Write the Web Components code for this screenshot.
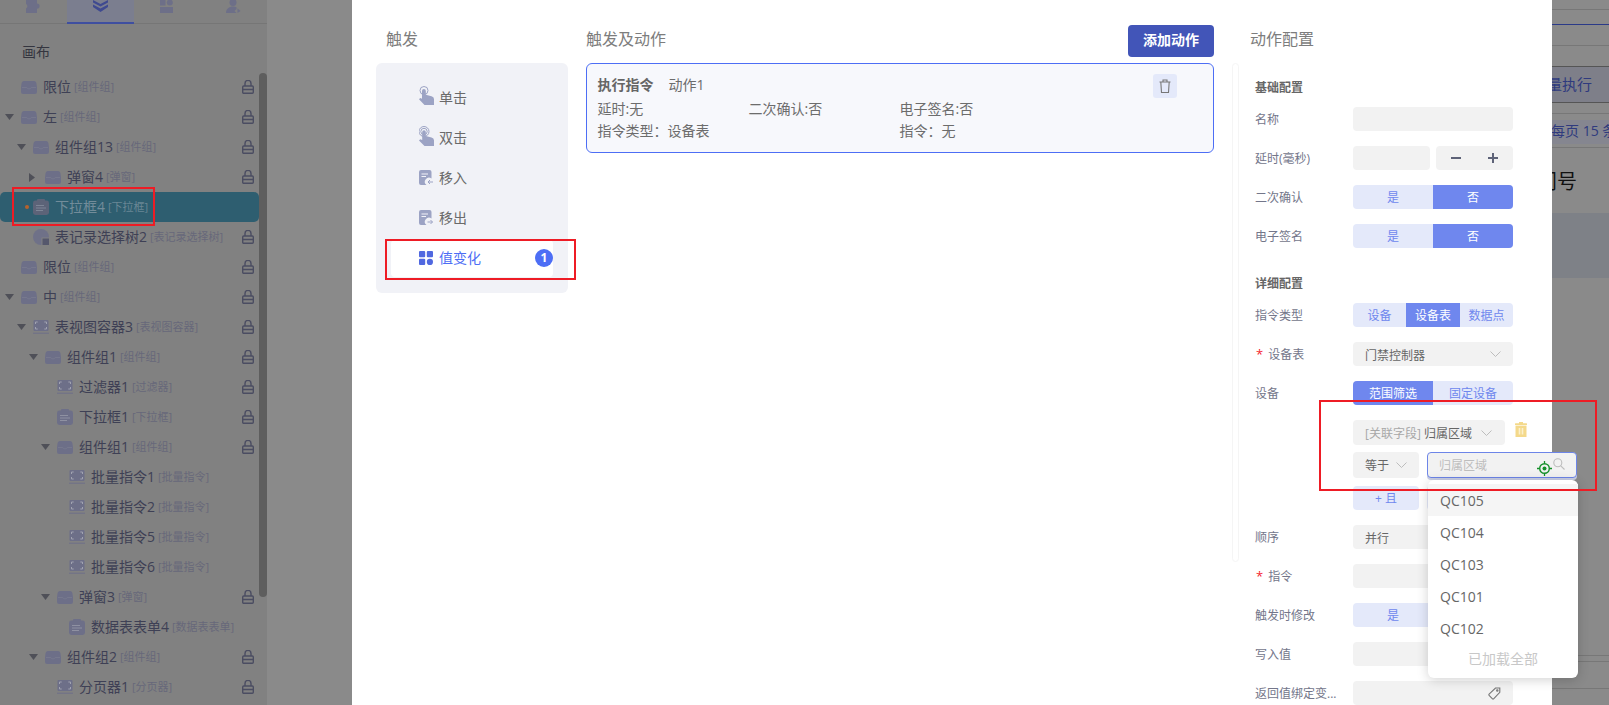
<!DOCTYPE html>
<html lang="zh"><head><meta charset="utf-8"><title>动作配置</title>
<style>
html,body{margin:0;padding:0;width:1609px;height:705px;overflow:hidden;background:#8a8a8a;font-family:"Open Sans","Noto Sans CJK SC",sans-serif;font-size:14px}
ed-page{display:flex}
</style></head><body>
<ed-page>
  <ed-sidebar></ed-sidebar>
  <ed-backdrop></ed-backdrop>
  <ed-modal></ed-modal>
  <ed-mark style="left:12px;top:187px;width:143px;height:39px"></ed-mark>
  <ed-mark style="left:385px;top:239px;width:191px;height:41px"></ed-mark>
  <ed-mark style="left:1319px;top:400px;width:278px;height:91px"></ed-mark>
</ed-page>
<script>
const ICON={
group:'<svg width="16" height="13" viewBox="0 0 16 13"><path d="M3 0h10c1.200 0 2 .8 2.400 2L16 6.500V11a2 2 0 0 1-2 2H2a2 2 0 0 1-2-2V6.500L.6 2C1 .8 1.800 0 3 0z" fill="#6d6f88"/><path d="M1 6.500h4.800l1 1.300h2.400l1-1.300H15" fill="none" stroke="#7e7f92" stroke-width=".6"/></svg>',
box:'<svg width="16" height="14" viewBox="0 0 16 14"><rect x="0.5" y="0" width="15" height="11" rx="1" fill="#6d6f88"/><path d="M2.500 4V2h2.200M11.300 2h2.200v2M13.500 7v2h-2.200M4.700 9H2.500V7" fill="none" stroke="#a0a2b0" stroke-width="1"/><path d="M0 13.200h16" stroke="#6d6f88" stroke-width="1"/></svg>',
clip:'<svg width="16" height="16" viewBox="0 0 16 16"><rect x="0" y="1.500" width="16" height="14.500" rx="2.400" fill="#6d6f88"/><rect x="4" y="0" width="8" height="3" rx="1" fill="#6d6f88"/><path d="M3 6.500h8M3 9h10M3 11.500h7" stroke="#8f91a2" stroke-width="1"/></svg>',
clipsel:'<svg width="16" height="16" viewBox="0 0 16 16"><rect x="0" y="1.500" width="16" height="14.500" rx="2.400" fill="#5c6378"/><rect x="4" y="0" width="8" height="3" rx="1" fill="#5c6378"/><path d="M3 6.500h8M3 9h10M3 11.500h7" stroke="#7d8596" stroke-width="1"/></svg>',
tree:'<svg width="16" height="16" viewBox="0 0 16 16"><circle cx="8" cy="8" r="8" fill="#6f7188"/><rect x="8.500" y="8.500" width="7.500" height="7.500" fill="#818181"/><rect x="9.500" y="9.500" width="6.500" height="6.500" fill="#55576c"/></svg>',
lock:'<svg width="12" height="14" viewBox="0 0 12 14" fill="none" stroke="#4b4d62" stroke-width="1.400"><rect x="0.7" y="6" width="10.600" height="7.300" rx="1"/><path d="M3 6V3.400a3 3 0 0 1 6 0V6M0.700 9.500h10.600"/></svg>',
down:'<svg width="9" height="6" viewBox="0 0 9 6" fill="#4f5058"><path d="M0 0h9L4.500 6z"/></svg>',
right:'<svg width="6" height="9" viewBox="0 0 6 9" fill="#4f5058"><path d="M0 0v9l6-4.500z"/></svg>',
tap:'<svg width="15" height="19" viewBox="0 0 15 19"><circle cx="5" cy="4.500" r="4" fill="none" stroke="#9ca3c4" stroke-width="1"/><path d="M3 5a1.900 1.900 0 0 1 3.800 0v3.800l5.700 1.400A3 3 0 0 1 15 13.200V19H5.500L0 13.200l1.200-1.200L3 12.800z" fill="#9ca3c4"/></svg>',
dbl:'<svg width="15" height="20" viewBox="0 0 15 20"><circle cx="5" cy="5.500" r="5" fill="none" stroke="#9ca3c4" stroke-width="1"/><circle cx="5" cy="5.500" r="3.200" fill="none" stroke="#9ca3c4" stroke-width="1"/><path d="M3.200 6a1.800 1.800 0 0 1 3.600 0v4l5.700 1.400A3 3 0 0 1 15 14.400V20H5.500L0 14.400l1.200-1.200L3.200 14z" fill="#9ca3c4"/></svg>',
docin:'<svg width="14" height="15" viewBox="0 0 14 15"><path d="M2 0h8.500a2 2 0 0 1 2 2v6.500a4 4 0 0 0-5 6.500H2a2 2 0 0 1-2-2V2a2 2 0 0 1 2-2z" fill="#9ca3c4"/><path d="M2.500 4h6.500M2.500 6.500h4.500" stroke="#f1f2f7" stroke-width="1.100"/><path d="M14 12H9M11 10l-2 2 2 2" fill="none" stroke="#9ca3c4" stroke-width="1"/></svg>',
docout:'<svg width="14" height="15" viewBox="0 0 14 15"><path d="M2 0h8.500a2 2 0 0 1 2 2v6.500a4 4 0 0 0-5 6.500H2a2 2 0 0 1-2-2V2a2 2 0 0 1 2-2z" fill="#9ca3c4"/><path d="M2.500 4h6.500M2.500 6.500h4.500" stroke="#f1f2f7" stroke-width="1.100"/><path d="M8.500 12h5M11.500 10l2 2-2 2" fill="none" stroke="#9ca3c4" stroke-width="1"/></svg>',
grid:'<svg width="14" height="14" viewBox="0 0 14 14" fill="#5068e0"><rect width="6.200" height="6.200" rx="1"/><rect x="7.800" width="6.200" height="6.200" rx="1"/><rect y="7.800" width="6.200" height="6.200" rx="1"/><circle cx="10.900" cy="10.900" r="3.100"/></svg>',
trash:'<svg width="12" height="14" viewBox="0 0 12 14" fill="none" stroke="#777" stroke-width="1.100"><path d="M0.500 3h11M4 3V1h4v2M1.800 3l.7 10.500h7L10.200 3"/></svg>',
ytrash:'<svg width="12" height="15" viewBox="0 0 12 15"><path d="M4 0h4v1.200h3.500a.5.500 0 0 1 .5.500V3H0V1.700a.5.500 0 0 1 .5-.5H4z" fill="#f4d98b"/><path d="M0.500 3.600h11V15h-11z" fill="#f4d98b"/><path d="M4.500 6v6.500M7.500 6v6.500" stroke="#fbf0cc" stroke-width="1.600"/></svg>',
target:'<svg width="15" height="15" viewBox="0 0 15 15" fill="none" stroke="#15902a"><circle cx="7.500" cy="7.500" r="4.800" stroke-width="1.400"/><circle cx="7.500" cy="7.500" r="2" fill="#15902a" stroke="none"/><path d="M7.500 0v2.500M7.500 12.500v2.500M0 7.500h2.500M12.500 7.500h2.500" stroke-width="1.300"/></svg>',
search:'<svg width="12" height="12" viewBox="0 0 12 12" fill="none" stroke="#bdbdbd" stroke-width="1.100"><circle cx="4.800" cy="4.800" r="4"/><path d="M7.800 7.800l3.700 3.700"/></svg>',
tag:'<svg width="13" height="13" viewBox="0 0 13 13" fill="none" stroke="#777" stroke-width="1.100"><path d="M7.500 1h4.300v4.300L5.600 11.800a.8.800 0 0 1-1.100 0L1.100 8.300a.8.800 0 0 1 0-1.100z"/><circle cx="9.300" cy="3.500" r=".7"/></svg>',
chev:'<svg width="11" height="6" viewBox="0 0 11 6" fill="none" stroke="#bdbdbd" stroke-width="1"><path d="M.5.500l5 5 5-5"/></svg>',
puzzle:'<svg width="15" height="13" viewBox="0 0 15 13" fill="#6d6f88"><path d="M0 0h11v3.500a2.600 2.600 0 0 1 0 5.200V13H0V8.500a2.500 2.500 0 0 0 0-4.500z"/></svg>',
layers:'<svg width="15" height="12" viewBox="0 0 15 12" fill="#3f4a90"><path d="M0 0l7.500 4L15 0v2.500L7.500 6.500 0 2.500zM0 4.500l7.500 4 7.500-4V7l-7.500 5L0 7z"/></svg>',
dash:'<svg width="13" height="13" viewBox="0 0 13 13" fill="#6d6f88"><rect width="5.500" height="5.500"/><circle cx="9.800" cy="2.600" r="3"/><path d="M0 7h13v6H0z"/></svg>',
user:'<svg width="15" height="13" viewBox="0 0 15 13" fill="#6d6f88"><circle cx="7" cy="2.500" r="3.500"/><path d="M0 13c0-4 3-6.500 7-6.500 1.500 0 2.500.3 3.500.8V9l-2 2 2 2z"/><path d="M11.500 8.500l3 2.500-3 2z"/></svg>'
};
function def(tag,css,html,init){
  customElements.define(tag,class extends HTMLElement{
    constructor(){super();this.attachShadow({mode:'open'});}
    connectedCallback(){
      const h=typeof html==='function'?html(this):html;
      this.shadowRoot.innerHTML='<style>'+css+'</style>'+h;
      if(init)init(this);
    }
  });
}
const A=(e,n,d='')=>e.hasAttribute(n)?e.getAttribute(n):d;

def('ed-mark',':host{position:absolute;box-sizing:border-box;border:2px solid #ee1c25;z-index:9;pointer-events:none}','');
def('ed-page',':host{display:flex;width:1609px;height:705px;position:relative;overflow:hidden}','<slot></slot>');

/* tree row */
def('ed-row',`
:host{display:flex;align-items:center;height:30px;box-sizing:border-box;padding-right:5px;border-radius:5px;white-space:nowrap}
:host([sel]){background:#2e5e70}
.i{width:16px;display:flex;align-items:center;justify-content:center;margin-right:6px;flex:none}
.a{width:16px;flex:none;display:flex;align-items:center}
.n{color:#3e4055;font-size:14px;margin-top:-2px}
.t{color:#67687a;font-size:11px;margin:-2px 0 0 3px;flex:1}
.l{flex:none;display:flex}
:host([sel]) .n{color:#728c9a}
:host([sel]) .t{color:#6a8795}
.dot{width:4px;height:4px;border-radius:50%;background:#b5622c;margin-left:8px}
`,e=>{
  const d=+A(e,'d','0'),arrow=A(e,'arrow'),icon=A(e,'icon','group');
  e.style.paddingLeft=(d*12+5)+'px';
  return `<span class="a">${arrow?ICON[arrow]:''}${e.hasAttribute('sel')?'<span class="dot"></span>':''}</span>
  <span class="i">${ICON[icon]}</span><span class="n">${A(e,'n')}</span><span class="t">[${A(e,'t')}]</span>
  ${e.hasAttribute('nolock')||e.hasAttribute('sel')?'':'<span class="l">'+ICON.lock+'</span>'}`;
});

def('ed-tab',`
:host{flex:1;height:24px;box-sizing:border-box;display:flex;justify-content:center;align-items:flex-start;overflow:hidden}
:host([on]){background:#7b7e8f;border-bottom:2px solid #3f4fa0}
`,e=>ICON[A(e,'i')]);

def('ed-sidebar',`
:host{display:flex;flex-direction:column;width:267px;height:705px;background:#818181;flex:none;position:relative;overflow:hidden}
.tabs{display:flex;height:24px;border-bottom:1px solid #767676;box-sizing:border-box;flex:none}
.canvas{height:30px;line-height:28px;margin:14px 0 4px;padding-left:22px;color:#34353f;font-size:14px;flex:none}
.tree{width:259px;flex:none}
.bar{position:absolute;left:259px;top:73px;width:8px;height:524px;border-radius:4px;background:#5e5e5e}
`,()=>{
 const rows=[
 ['0','','group','限位','组件组'],['0','down','group','左','组件组'],['1','down','group','组件组13','组件组'],
 ['2','right','group','弹窗4','弹窗'],['1','','clipsel','下拉框4','下拉框','sel'],['1','','tree','表记录选择树2','表记录选择树'],
 ['0','','group','限位','组件组'],['0','down','group','中','组件组'],['1','down','box','表视图容器3','表视图容器'],
 ['2','down','group','组件组1','组件组'],['3','','box','过滤器1','过滤器'],['3','','clip','下拉框1','下拉框'],
 ['3','down','group','组件组1','组件组'],['4','','box','批量指令1','批量指令','nolock'],['4','','box','批量指令2','批量指令','nolock'],
 ['4','','box','批量指令5','批量指令','nolock'],['4','','box','批量指令6','批量指令','nolock'],['3','down','group','弹窗3','弹窗'],
 ['4','','clip','数据表表单4','数据表表单','nolock'],['2','down','group','组件组2','组件组'],['3','','box','分页器1','分页器']];
 return `<div class="tabs"><ed-tab i="puzzle"></ed-tab><ed-tab i="layers" on></ed-tab><ed-tab i="dash"></ed-tab><ed-tab i="user"></ed-tab></div>
 <div class="canvas">画布</div><div class="tree">${rows.map(r=>`<ed-row d="${r[0]}" arrow="${r[1]}" icon="${r[2]}" n="${r[3]}" t="${r[4]}" ${r[5]||''}></ed-row>`).join('')}</div><div class="bar"></div>`;
});

/* page behind the mask */
def('ed-backdrop',`
:host{flex:1;display:flex;flex-direction:column;height:705px;background:#8a8a8a;overflow:hidden;white-space:nowrap;padding-left:85px;box-sizing:border-box}
div{box-sizing:border-box;flex:none}
.l{border-bottom:1px solid #777}
.btn{height:37px;background:#7e7f89;border-bottom:1px solid #555;border-top:1px solid #555;display:flex;justify-content:flex-end;align-items:center;padding:0 17px 2px 0;color:#2f3a7e;font-size:15px}
.pg{height:24px;background:#858690;margin-top:6px;padding-left:1199px;color:#2f3a7e;font-size:14px;line-height:22px}
.hd{height:65px;padding-left:1185px;color:#111;font-size:20px;line-height:68px}
.band{height:65px;background:#7e8187}
`,`<div class="l" style="height:10px"></div>
<div style="height:15px;border-bottom:1px solid #2b3a88"></div>
<div class="l" style="height:21px"></div>
<div style="height:20px"></div>
<div class="btn">批量执行</div>
<div class="l" style="height:11px"></div>
<div class="pg">每页 15 条</div>
<div class="l" style="height:4px"></div>
<div class="hd">门号</div>
<div class="band"></div>
<div style="height:378px" class="l"></div>
<div class="l" style="height:6px"></div>
<div class="l" style="height:27px"></div>`);

/* trigger list */
def('ed-trigger',`
:host{display:flex;align-items:center;height:37px;padding-left:28px;color:#6a6a6a;font-size:14px;border-radius:4px;position:relative;flex:none}
:host([on]){background:#fff;color:#4d6ef5}
.i{width:20px;display:flex;align-items:center;margin-top:-2px}
:host([i=tap]) .i,:host([i=dbl]) .i{margin-top:-6px}
:host([on]) .i{margin-top:-1px}
.t{margin-top:-4px}
.b{position:absolute;right:0;top:9px;width:18px;height:18px;border-radius:50%;background:#4d6ef5;color:#fff;font-size:12px;font-weight:700;line-height:18px;text-align:center}
`,e=>`<span class="i">${ICON[A(e,'i')]}</span><span class="t"><slot></slot></span>${e.hasAttribute('n')?`<span class="b">${A(e,'n')}</span>`:''}`);

/* action card */
def('ed-card',`
:host{display:block;box-sizing:border-box;height:90px;background:#f7f8fc;border:1px solid #4d6ef5;border-radius:6px;padding:10px 36px 0 10.500px;font-size:14px;color:#6c6c6c;position:relative;flex:none}
.r{display:grid;grid-template-columns:151px 151px 1fr;line-height:22px;height:22px}
.h{display:flex;line-height:22px;height:22px;margin-bottom:2px}
b{font-weight:700;color:#666;margin-right:15px}
.del{position:absolute;left:566px;top:10px;width:24px;height:24px;background:#e4e9fa;border-radius:3px;display:flex;align-items:center;justify-content:center}
`,`<div class="h"><b>执行指令</b><span>动作1</span></div>
<div class="r"><span>延时:无</span><span>二次确认:否</span><span>电子签名:否</span></div>
<div class="r"><span>指令类型：设备表</span><span></span><span>指令：无</span></div>
<div class="del">${ICON.trash}</div>`);

/* form */
def('ed-field',`
:host{display:flex;align-items:flex-start;min-height:24px;flex:none}
.lb{width:98px;flex:none;height:24px;line-height:25px;font-size:12px;color:#73768a;white-space:nowrap}
.s{color:#f5222d;margin:0 5px 0 1px;font-size:13px}
.c{width:160px;flex:none;display:flex;flex-direction:column}
`,e=>`<div class="lb">${e.hasAttribute('req')?'<span class="s">*</span>':''}${A(e,'label')}</div><div class="c"><slot></slot></div>`);
def('ed-head',':host{display:block;height:24px;line-height:25px;font-size:12px;font-weight:700;color:#666;flex:none}','<slot></slot>');
def('ed-input',`
:host{display:flex;align-items:center;height:24px;background:#f2f2f2;border-radius:4px;box-sizing:border-box;padding:0 12px;font-size:12px;color:#666;justify-content:space-between;flex:none;white-space:nowrap}
.x{margin-top:1px}
.ic{display:flex}
`,e=>`<span class="x"><slot></slot></span>${e.hasAttribute('icon')?`<span class="ic">${ICON[A(e,'icon')]}</span>`:''}`);
def('ed-seg',`
:host{display:flex;height:24px;border-radius:4px;overflow:hidden;background:#e4e9fa;font-size:12px;color:#6f87ee;flex:none}
span{flex:1;text-align:center;line-height:25px}
.on{background:#6f87ee;color:#fff}
`,e=>A(e,'items').split('|').map((t,i)=>`<span class="${String(i)===A(e,'on')?'on':''}" style="${A(e,'w')?'flex:none;width:'+A(e,'w').split(',')[i]+'px':''}">${t}</span>`).join(''));
def('ed-stepper',`
:host{display:flex;gap:6px;height:24px;flex:none}
.b{width:77px;box-sizing:border-box;flex:none;background:#f2f2f2;border-radius:4px}
.s{display:flex;align-items:center;justify-content:space-between;padding:0 14px}
`,`<div class="b"></div><div class="b s"><svg width="12" height="12" viewBox="0 0 12 12"><path d="M1 6h10" stroke="#5e6378" stroke-width="2"/></svg><svg width="12" height="12" viewBox="0 0 12 12"><path d="M1 6h10M6 1v10" stroke="#5e6378" stroke-width="2"/></svg></div>`);

def('ed-dropdown',`
:host{position:absolute;left:1px;top:28px;width:150px;height:198px;box-sizing:border-box;background:#fff;border-radius:6px;box-shadow:0 2px 12px rgba(0,0,0,.18);padding-top:4px;z-index:5;font-size:14px;color:#666}
div{height:32px;line-height:33px;padding-left:12px}
.on{background:#f5f5f5}
.end{text-align:center;padding:0;color:#c8c8c8;line-height:30px}
`,`<div class="on">QC105</div><div>QC104</div><div>QC103</div><div>QC101</div><div>QC102</div><div class="end">已加载全部</div>`);

def('ed-filter',`
:host{display:flex;flex-direction:column;width:224px;margin:15px 0 0;flex:none}
.r1{display:flex;height:25px}
.sel{width:152px;height:25px;flex:none;background:#f2f2f2;border-radius:4px;box-sizing:border-box;padding:0 12px;display:flex;align-items:center;justify-content:space-between;font-size:12px;color:#666;white-space:nowrap}
.sel i{font-style:normal;color:#a8a8a8}
.sel svg{display:block;margin-right:1px}
.del{margin:2px 0 0 10px;display:flex;align-items:flex-start}
.r2{display:flex;height:26px;margin-top:7px;gap:8px}
.eq{width:66px;height:26px;flex:none;background:#f2f2f2;border-radius:4px;box-sizing:border-box;padding:0 12px;display:flex;align-items:center;justify-content:space-between;font-size:12px;color:#666}
.wrap{position:relative;width:150px;height:26px;flex:none}
.inp{box-sizing:border-box;height:26px;background:#f2f2f2;border:1px solid #6d85e8;border-radius:4px;box-shadow:0 2px 0 #c9cfe6;display:flex;align-items:center;padding-left:11px;font-size:12px;color:#bdbdbd}
.tg{position:absolute;left:110px;top:9px;display:flex}
.sr{position:absolute;left:126px;top:6px;display:flex}
.r3{display:flex;height:24px;margin-top:8px;gap:8px}
.add{width:66px;height:24px;flex:none;background:#e4e9fa;border-radius:4px;text-align:center;line-height:25px;font-size:12px;color:#6f87ee}
.add2{width:20px}
`,`<div class="r1"><div class="sel"><span><i>[关联字段]</i> 归属区域</span>${ICON.chev}</div><div class="del">${ICON.ytrash}</div></div>
<div class="r2"><div class="eq"><span>等于</span>${ICON.chev}</div><div class="wrap"><div class="inp">归属区域</div><span class="tg">${ICON.target}</span><span class="sr">${ICON.search}</span><ed-dropdown></ed-dropdown></div></div>
<div class="r3"><div class="add">+ 且</div><div class="add add2"></div></div>`);

def('ed-modal',`
:host{position:absolute;left:352px;top:0;width:1200px;height:705px;background:#fff;display:flex;padding-left:24px;box-sizing:border-box;color:#7a7a7a;z-index:2}
.col{display:flex;flex-direction:column;flex:none}
.hd{height:63px;flex:none;display:flex;justify-content:space-between;align-items:flex-start;box-sizing:border-box;padding-top:27px;font-size:16px;line-height:24px;color:#7d7d7d;white-space:nowrap}
.c1{width:192px;margin-right:18px}
.c1 .hd{padding-left:10px}
.c2{width:628px;margin-right:18px}
.add{margin-top:-2px;width:86px;height:32px;line-height:30px;text-align:center;background:#4255b8;border-radius:4px;color:#fff;font-size:14px;font-weight:700}
.panel{height:230px;flex:none;box-sizing:border-box;background:#f1f2f7;border-radius:6px;padding:17px 15px 0;display:flex;flex-direction:column;gap:3px}
.c3{width:316px}
.c3 .hd{padding-left:18px}
.body{display:flex;flex:none}
.track{width:7px;height:499px;box-sizing:border-box;border:1px solid #f5f5f5;border-radius:4px;margin-right:16px;flex:none}
.form{display:flex;flex-direction:column;padding-top:12px;width:258px;flex:none}
.form>*{margin-bottom:15px}
.form>ed-head{margin-bottom:8px}
.form>ed-head.d{margin-top:8px}
`,`<div class="col c1"><div class="hd">触发</div>
<div class="panel">
<ed-trigger i="tap">单击</ed-trigger><ed-trigger i="dbl">双击</ed-trigger><ed-trigger i="docin">移入</ed-trigger><ed-trigger i="docout">移出</ed-trigger><ed-trigger i="grid" on n="1">值变化</ed-trigger>
</div></div>
<div class="col c2"><div class="hd"><span>触发及动作</span><span class="add">添加动作</span></div><ed-card></ed-card></div>
<div class="col c3"><div class="hd">动作配置</div>
<div class="body"><div class="track"></div><div class="form">
<ed-head>基础配置</ed-head>
<ed-field label="名称"><ed-input></ed-input></ed-field>
<ed-field label="延时(毫秒)"><ed-stepper></ed-stepper></ed-field>
<ed-field label="二次确认"><ed-seg items="是|否" on="1"></ed-seg></ed-field>
<ed-field label="电子签名"><ed-seg items="是|否" on="1"></ed-seg></ed-field>
<ed-head class="d">详细配置</ed-head>
<ed-field label="指令类型"><ed-seg items="设备|设备表|数据点" on="1" w="53,54,53"></ed-seg></ed-field>
<ed-field label="设备表" req><ed-input icon="chev">门禁控制器</ed-input></ed-field>
<ed-field label="设备"><ed-seg items="范围筛选|固定设备" on="0"></ed-seg><ed-filter></ed-filter></ed-field>
<ed-field label="顺序"><ed-input>并行</ed-input></ed-field>
<ed-field label="指令" req><ed-input></ed-input></ed-field>
<ed-field label="触发时修改"><ed-seg items="是|"></ed-seg></ed-field>
<ed-field label="写入值"><ed-input></ed-input></ed-field>
<ed-field label="返回值绑定变..."><ed-input icon="tag"></ed-input></ed-field>
</div></div></div>`);
</script>
</body></html>
